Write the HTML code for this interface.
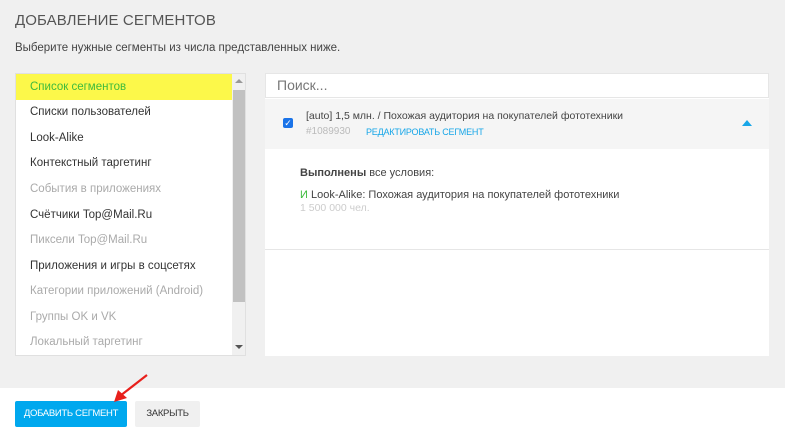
<!DOCTYPE html>
<html><head><meta charset="utf-8"><style>
*{margin:0;padding:0;box-sizing:border-box}
body{width:785px;height:434px;background:#f0f0f0;font-family:"Liberation Sans",sans-serif;position:relative;overflow:hidden;color:#333}
.abs{position:absolute}
h1{position:absolute;left:15px;top:12px;font-size:15px;font-weight:normal;color:#555;letter-spacing:0.1px}
.sub{left:15px;top:42px;font-size:11.5px;color:#444}
.list{left:15px;top:73px;width:231px;height:283px;background:#fff;border:1px solid #e0e0e0}
.item{position:absolute;left:14px;font-size:11.5px;color:#333;white-space:nowrap}
.dis{color:#aaa}
.sb{left:232px;top:74px;width:13px;height:281px;background:#f0f0f0}
.right{left:265px;top:73px;width:504px;height:283px;background:#fff}
.foot{left:0;top:388px;width:785px;height:46px;background:#fff}
</style></head><body>
<h1>ДОБАВЛЕНИЕ СЕГМЕНТОВ</h1>
<div class="abs sub">Выберите нужные сегменты из числа представленных ниже.</div>
<div class="abs list">
 <div class="abs" style="left:0;top:0;width:217px;height:26px;background:#fcf84a"></div>
 <div class="item" style="top:7px;color:#3dbb3d">Список сегментов</div>
 <div class="item" style="top:32px">Списки пользователей</div>
 <div class="item" style="top:58px">Look-Alike</div>
 <div class="item" style="top:83px">Контекстный таргетинг</div>
 <div class="item dis" style="top:109px">События в приложениях</div>
 <div class="item" style="top:135px">Счётчики Top@Mail.Ru</div>
 <div class="item dis" style="top:160px">Пиксели Top@Mail.Ru</div>
 <div class="item" style="top:186px">Приложения и игры в соцсетях</div>
 <div class="item dis" style="top:211px">Категории приложений (Android)</div>
 <div class="item dis" style="top:237px">Группы OK и VK</div>
 <div class="item dis" style="top:262px">Локальный таргетинг</div>
</div>
<div class="abs sb">
 <div class="abs" style="left:3px;top:5px;width:0;height:0;border-left:4px solid transparent;border-right:4px solid transparent;border-bottom:4px solid #999"></div>
 <div class="abs" style="left:1px;top:16px;width:12px;height:212px;background:#c1c1c1"></div>
 <div class="abs" style="left:3px;top:271px;width:0;height:0;border-left:4px solid transparent;border-right:4px solid transparent;border-top:4px solid #555"></div>
</div>
<div class="abs right">
 <div class="abs" style="left:0;top:0;width:504px;height:25px;border:1px solid #e6e6e6;background:#fff"></div>
 <div class="abs" style="left:12px;top:4px;font-size:14px;color:#777">Поиск...</div>
 <div class="abs" style="left:0;top:26px;width:504px;height:50px;background:#f5f5f5"></div>
 <div class="abs" style="left:18px;top:45px;width:10px;height:10px;background:#1a73e8;border-radius:2px;color:#fff;font-size:9px;line-height:10px;text-align:center">✓</div>
 <div class="abs" style="left:41px;top:37px;font-size:10.5px;color:#444">[auto] 1,5 млн. / Похожая аудитория на покупателей фототехники</div>
 <div class="abs" style="left:41px;top:53px;font-size:10px;color:#bbb">#1089930</div>
 <div class="abs" style="left:101px;top:54px;font-size:9px;color:#17a6e8;letter-spacing:-0.2px">РЕДАКТИРОВАТЬ СЕГМЕНТ</div>
 <div class="abs" style="left:477px;top:47px;width:0;height:0;border-left:5px solid transparent;border-right:5px solid transparent;border-bottom:6px solid #17a6e8"></div>
 <div class="abs" style="left:35px;top:94px;font-size:11px;color:#444"><b>Выполнены</b> все условия:</div>
 <div class="abs" style="left:35px;top:116px;font-size:11px;color:#444"><span style="color:#3dbb3d">И</span> Look-Alike: Похожая аудитория на покупателей фототехники</div>
 <div class="abs" style="left:35px;top:129px;font-size:10.5px;color:#ccc">1 500 000 чел.</div>
 <div class="abs" style="left:0;top:176px;width:504px;height:1px;background:#e6e6e6"></div>
</div>
<div class="abs foot"></div>
<div class="abs" style="left:15px;top:401px;width:112px;height:26px;background:#00a8ee;border-radius:2px;color:#fff;font-size:9.5px;line-height:26px;text-align:center;letter-spacing:-0.3px">ДОБАВИТЬ СЕГМЕНТ</div>
<div class="abs" style="left:135px;top:401px;width:65px;height:26px;background:#f0f0f0;border-radius:2px;color:#333;font-size:9.5px;line-height:26px;text-align:center;letter-spacing:-0.3px">ЗАКРЫТЬ</div>
<svg class="abs" style="left:110px;top:372px" width="40" height="32"><line x1="37" y1="3" x2="10" y2="24" stroke="#e8201c" stroke-width="2.2"/><polygon points="4,30 8,18 17,26" fill="#e8201c"/></svg>
</body></html>
